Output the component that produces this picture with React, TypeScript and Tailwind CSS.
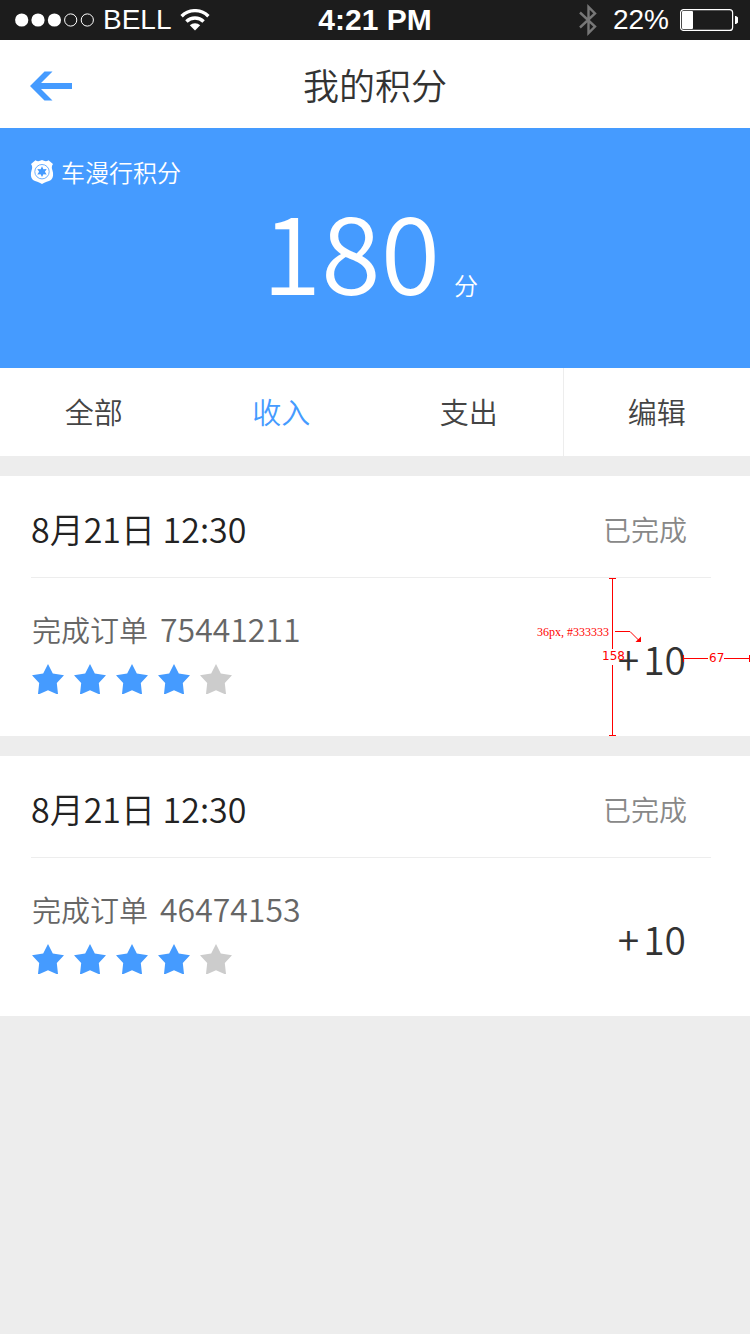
const BLUE = "#459bff";

function StatusBar() {
  return (
    <div className="grid h-10 grid-cols-[1fr_auto_1fr] items-center bg-[#1c1c1c] px-3 font-['Liberation_Sans',Arial,sans-serif] text-[28px] leading-10 text-white">
      <div className="flex items-center">
        <svg width="83" height="14" viewBox="-3 0 83 14" aria-hidden="true">
          <g fill="#fff">
            <circle cx="6.7" cy="7" r="6.6" />
            <circle cx="23" cy="7" r="6.6" />
            <circle cx="39.4" cy="7" r="6.6" />
          </g>
          <g fill="none" stroke="#fff" strokeWidth="1">
            <circle cx="55.7" cy="7" r="6.1" />
            <circle cx="72.3" cy="7" r="6.1" />
          </g>
        </svg>
        <span className="ml-2">BELL</span>
        <svg className="ml-2" width="30" height="22" viewBox="0 0 30 22" aria-hidden="true">
          <g fill="none" stroke="#fff" strokeWidth="3.4">
            <path d="M1.6 7.2A19 19 0 0 1 28.4 7.2" />
            <path d="M6.4 12.5A12.3 12.3 0 0 1 23.6 12.5" />
          </g>
          <path d="M9.8 16.3a7.4 7.4 0 0 1 10.4 0L15 21.6z" fill="#fff" />
        </svg>
      </div>
      <div className="text-[30px] font-bold">4:21 PM</div>
      <div className="flex items-center justify-end">
        <svg width="18" height="32" viewBox="0 0 18 32" aria-hidden="true">
          <path
            d="M1 8.5L16 22.5 9.5 29V3L16 9.5 1 23.5"
            fill="none"
            stroke="#777"
            strokeWidth="2.4"
          />
        </svg>
        <span className="ml-4">22%</span>
        <svg className="ml-[10px]" width="59" height="22" viewBox="0 0 59 22" aria-hidden="true">
          <rect x="1.6" y="0.6" width="52" height="20.8" rx="3" fill="none" stroke="#fff" strokeWidth="1.2" />
          <rect x="3" y="2" width="11" height="18" rx="1" fill="#fff" />
          <path d="M56 7c5 0 5 8 0 8z" fill="#fff" />
        </svg>
      </div>
    </div>
  );
}

function Header() {
  return (
    <header className="grid h-[88px] grid-cols-[1fr_auto_1fr] items-center bg-white px-[30px]">
      <button type="button" aria-label="返回" className="justify-self-start pt-1">
        <svg className="block" width="42" height="30" viewBox="0 0 42 30" aria-hidden="true">
          <path d="M14.5 0.5H22.5L11 12H42V18H11L22.5 29.5H14.5L0 15z" fill={BLUE} />
        </svg>
      </button>
      <h1 className="text-[36px] leading-[52px] text-[#333]">我的积分</h1>
    </header>
  );
}

function Badge() {
  return (
    <svg width="24" height="24" viewBox="-1 0 24 24" aria-hidden="true">
      <path
        d="M4.5 0.3C6.5 1.6 8.5 1.3 11 0C13.5 1.3 15.5 1.6 17.5 0.3L22 4C20.5 6 20.5 8 21.5 10.5C22.5 14 22.5 17.5 20 20C17.5 21.8 14 21.8 11 24C8 21.8 4.5 21.8 2 20C-0.5 17.5 -0.5 14 0.5 10.5C1.5 8 1.5 6 0 4z"
        fill="#fff"
      />
      <circle cx="11" cy="11.7" r="7.2" fill="none" stroke={BLUE} strokeWidth="0.8" />
      <path
        d="M11 6.3L12.4 9.2 15.7 9 13.9 11.7 15.7 14.4 12.4 14.2 11 17.1 9.6 14.2 6.3 14.4 8.1 11.7 6.3 9 9.6 9.2z"
        fill={BLUE}
      />
    </svg>
  );
}

function Summary() {
  return (
    <section className="h-60 bg-[#459bff] px-[30px] pt-[26px] text-white">
      <div className="flex items-center gap-[7px] text-[24px] leading-9">
        <Badge />
        <span>车漫行积分</span>
      </div>
      <p className="flex items-baseline justify-center gap-[14px] pr-[10px] leading-[116px]">
        <span className="text-[108px]">180</span>
        <span className="text-[24px]">分</span>
      </p>
    </section>
  );
}

const tabs = [
  { label: "全部", style: "text-[#444]" },
  { label: "收入", style: "text-[#459bff]" },
  { label: "支出", style: "text-[#444]" },
  { label: "编辑", style: "border-l border-[#ededed] text-[#444]" },
];

function Tabs() {
  return (
    <nav className="grid h-[88px] grid-cols-4 bg-white text-[29px]">
      {tabs.map((tab) => (
        <button key={tab.label} type="button" className={tab.style}>
          {tab.label}
        </button>
      ))}
    </nav>
  );
}

function Stars({ count }: { count: number }) {
  return (
    <div className="flex gap-[10px]" role="img" aria-label={`${count}/5`}>
      {[1, 2, 3, 4, 5].map((n) => (
        <svg key={n} width="32" height="30" viewBox="0 0 32 30" aria-hidden="true">
          <path
            d="M16 0L20.8 9.5 32 11.3 24.8 19 26 30H24.5L16 26.3 7.5 30H6L7.2 19 0 11.3 11.2 9.5z"
            fill={n <= count ? BLUE : "#ccc"}
          />
        </svg>
      ))}
    </div>
  );
}

function Measurements() {
  return (
    <svg
      className="absolute top-0 right-0 font-normal"
      width="214"
      height="158"
      viewBox="0 0 214 158"
      fill="none"
      stroke="#f00"
      aria-hidden="true"
    >
      <g shapeRendering="crispEdges">
        <path d="M73 0.5H80M76.5 0V71M76.5 87V158M73 157.5H80" />
        <path d="M147 80.5H172M188 80.5H214M147.5 77V84M213.5 77V84" />
        <path d="M79 53.5H94" />
      </g>
      <path d="M94 53.5L103 62.5" />
      <path d="M105 64V58.5L99.5 64z" fill="#f00" stroke="none" />
      <g fill="#f00" stroke="none" fontSize="12">
        <text x="1" y="58" fontFamily="Liberation Serif, serif">36px, #333333</text>
        <text x="66" y="82" fontFamily="DejaVu Sans, sans-serif">158</text>
        <text x="173" y="84" fontFamily="DejaVu Sans, sans-serif">67</text>
      </g>
    </svg>
  );
}

type Entry = { date: string; status: string; order: string; rating: number; points: number };

const entries: Entry[] = [
  { date: "8月21日 12:30", status: "已完成", order: "75441211", rating: 4, points: 10 },
  { date: "8月21日 12:30", status: "已完成", order: "46474153", rating: 4, points: 10 },
];

function EntryCard({ entry, measured }: { entry: Entry; measured: boolean }) {
  return (
    <li className="bg-white">
      <div className="mr-[39px] ml-[31px] flex h-[102px] items-center justify-between border-b border-[#ededed] pt-1 pr-6">
        <span className="text-[34px] leading-[50px] text-[#222]">{entry.date}</span>
        <span className="text-[28px] leading-10 text-[#888]">{entry.status}</span>
      </div>
      <div className="relative flex h-[158px] justify-between pt-7 pr-16 pl-8">
        <div>
          <p className="mb-[13px] flex items-baseline gap-3 leading-[44px] text-[#666]">
            <span className="text-[29px]">完成订单</span>
            <span className="text-[32px]">{entry.order}</span>
          </p>
          <Stars count={entry.rating} />
        </div>
        <span className="flex gap-1 pt-6 text-[39px] leading-[56px] text-[#333]">
          <span>+</span>
          <span>{entry.points}</span>
        </span>
        {measured && <Measurements />}
      </div>
    </li>
  );
}

export default function App() {
  return (
    <div className="min-h-screen bg-[#ededed] font-['Noto_Sans_CJK_SC',sans-serif] font-[350]">
      <StatusBar />
      <Header />
      <main>
        <Summary />
        <Tabs />
        <ul className="mt-5 flex flex-col gap-5">
          {entries.map((entry, index) => (
            <EntryCard key={entry.order} entry={entry} measured={index === 0} />
          ))}
        </ul>
      </main>
    </div>
  );
}
